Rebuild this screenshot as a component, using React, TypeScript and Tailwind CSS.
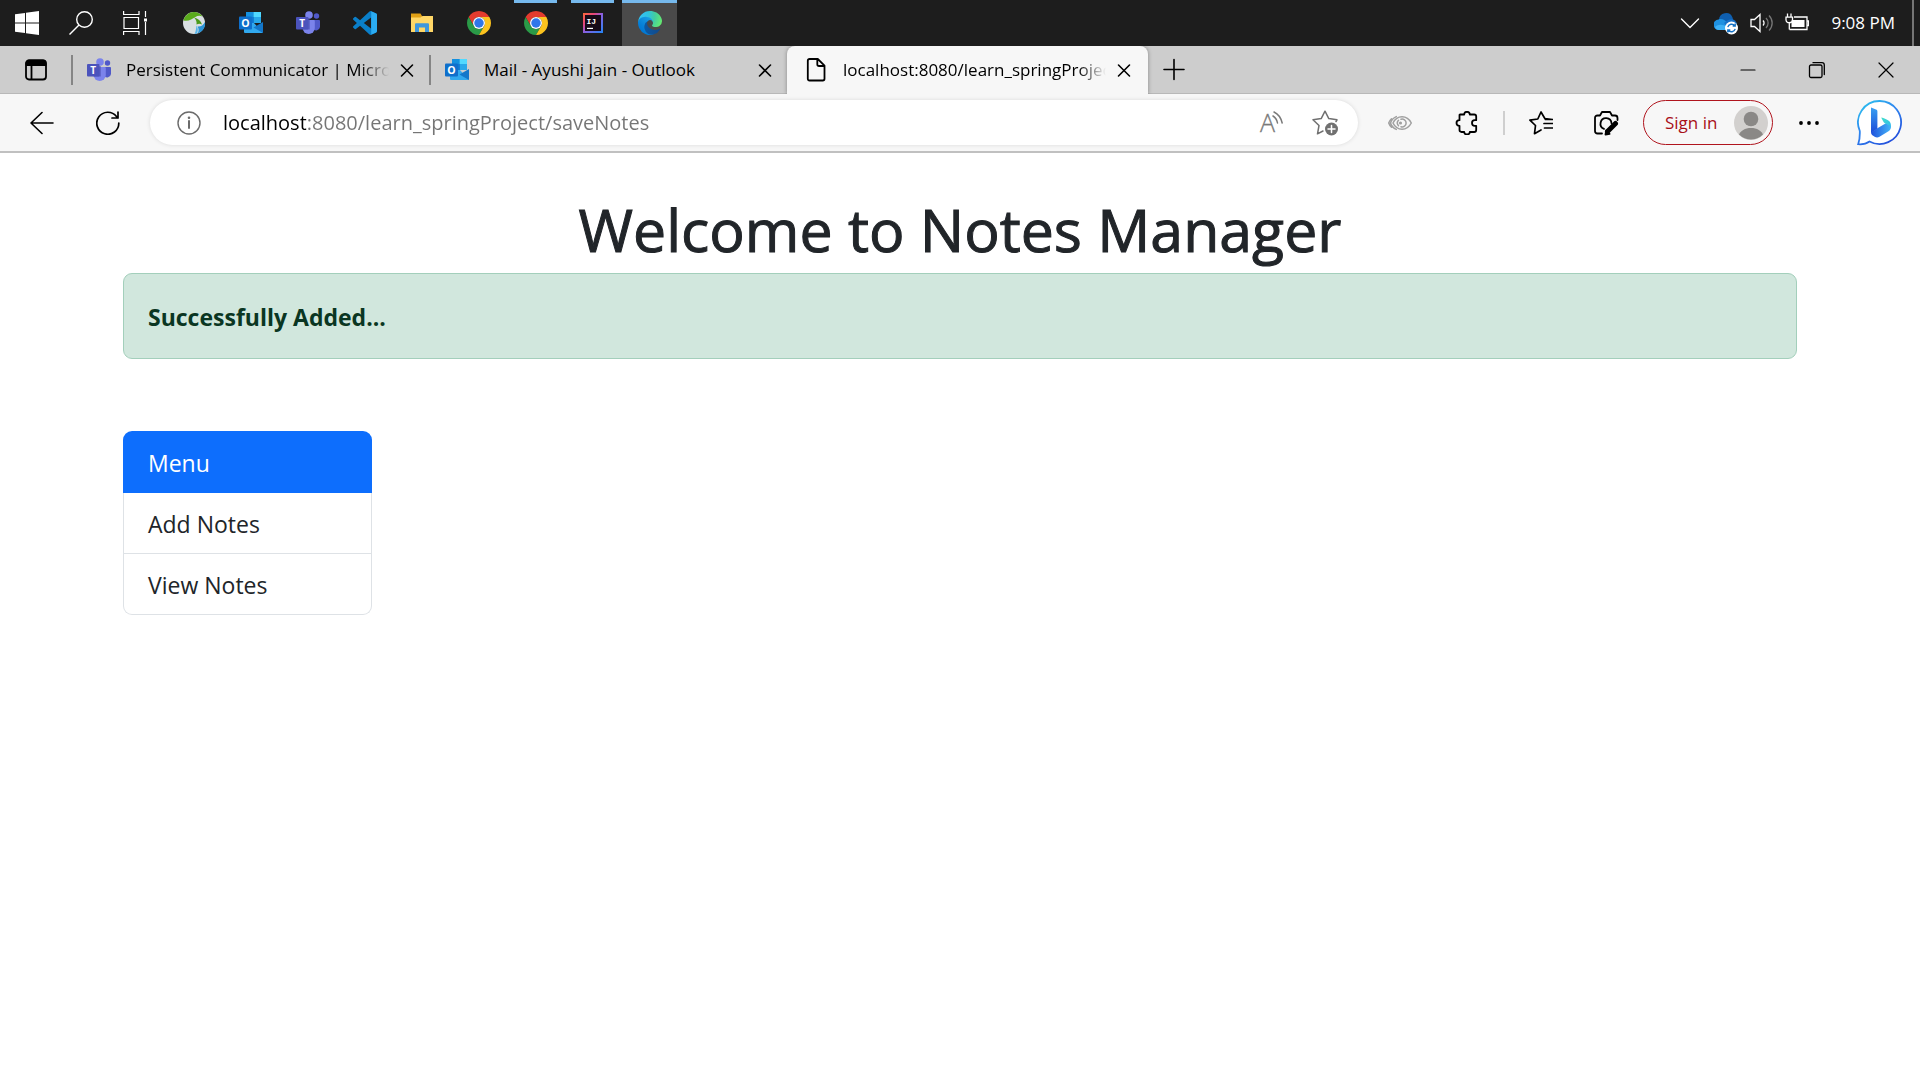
import React from "react";

type Kids = { children: React.ReactNode };

/* ---------- Brand icons ---------- */

function WindowsLogo() {
  return (
    <svg width="24" height="24" viewBox="0 0 24 24" fill="#fff" aria-hidden="true">
      <path d="M0 3.300 10 1.900V11.400H0zM11 1.750 24 0V11.400H11zM0 12.400H10V22.100L0 20.700zM11 12.400H24V24L11 22.250z" />
    </svg>
  );
}

function TaskSearch() {
  return (
    <svg width="24" height="24" viewBox="0 0 24 24" fill="none" stroke="#fff" strokeWidth="1.400" aria-hidden="true">
      <circle cx="15.500" cy="8.500" r="7.800" />
      <path d="M10 14 .5 23.500" />
    </svg>
  );
}

function TaskView() {
  return (
    <svg width="24" height="24" viewBox="0 0 24 24" fill="none" stroke="#fff" strokeWidth="1.200" aria-hidden="true">
      <path d="M1 6.500h14.500v11H1zM.600 0v3.500H16V0M.600 24v-3.500H16V24M22.500 0v6M22.500 11v13" />
      <path d="M21 7.500h3v3h-3z" fill="#fff" stroke="none" />
    </svg>
  );
}

function GlobeApp() {
  return (
    <svg width="24" height="24" viewBox="0 0 24 24" aria-hidden="true">
      <circle cx="12" cy="12" r="11" fill="#d9dfe2" />
      <path d="M1.500 9.500C3 4 7.500 1 12 1c3.500 0 6.500 1.500 8.500 4.500-2.500-1-5-.8-7 .5C10 8 7 10.500 1.500 9.500z" fill="#5aab1c" />
      <path d="M12 6.500c4 1 7 3.500 8 7-2-1-3.500-1-5.500 0 .5-3-.5-5-2.500-7z" fill="#4b9a1a" />
      <path d="M23 11c.7 5.500-2.500 10-7.500 11.400C17 20 17 18 15.500 15.500c3 .5 5.500-1 7.500-4.500z" fill="#2a93d6" />
      <path d="M14.500 14.500c1.500 2.500 1.800 5 .5 8l-2.500.4c1.500-2.500 1.500-5.500 2-8.400z" fill="#55b5ea" />
    </svg>
  );
}

function OutlookLogo() {
  return (
    <svg width="24" height="24" viewBox="0 0 24 24" aria-hidden="true">
      <path d="M7 1h15v11H7z" fill="#0a63b8" />
      <path d="M7 1h7.500v5H7z" fill="#1490df" />
      <path d="M14.500 1H22v5h-7.500z" fill="#50d9ff" />
      <path d="M14.500 6H22v6h-7.500z" fill="#28a8ea" />
      <path d="M7 6h7.500v6H7z" fill="#0f78d4" />
      <path d="M5 12h10l9 10H6a1 1 0 0 1-1-1z" fill="#31a9ee" />
      <path d="M24 11v11L14.500 16.500z" fill="#1377ca" />
      <rect y="5.500" width="13" height="13" rx="1" fill="#0f6fcb" />
      <text x="6.500" y="16" textAnchor="middle" fontFamily="Open Sans, sans-serif" fontWeight="700" fontSize="10.500" fill="#fff">O</text>
    </svg>
  );
}

function TeamsLogo() {
  return (
    <svg width="24" height="24" viewBox="0 0 24 24" aria-hidden="true">
      <circle cx="20.500" cy="5" r="2.700" fill="#5059c9" />
      <path d="M17 9h6.200c.5 0 .8.300.8.800v6.200a4 4 0 0 1-7 2z" fill="#5059c9" />
      <circle cx="13" cy="4" r="3.800" fill="#7b83eb" />
      <path d="M7.500 9h10.400c.5 0 .9.400.9.900v7a6 6 0 0 1-12.200 0V9.900c0-.5.400-.9.900-.9z" fill="#7b83eb" />
      <path d="M6.600 8h7.200v10.500H6.600z" fill="#4348a8" opacity=".6" />
      <rect y="6" width="12.500" height="12.500" rx="1" fill="#4b53bc" />
      <text x="6.250" y="15.700" textAnchor="middle" fontFamily="Open Sans, sans-serif" fontWeight="700" fontSize="10" fill="#fff">T</text>
    </svg>
  );
}

function CodeLogo() {
  return (
    <svg width="24" height="24" viewBox="0 0 24 24" aria-hidden="true">
      <path
        fill="#0a7fc9"
        fillRule="evenodd"
        d="M23.150 2.587L18.210.210a1.494 1.494 0 0 0-1.705.290l-9.460 8.630-4.120-3.128a.999.999 0 0 0-1.276.057L.327 7.261A1 1 0 0 0 .326 8.740L3.899 12 .326 15.260a1 1 0 0 0 .001 1.479L1.650 17.940a.999.999 0 0 0 1.276.057l4.120-3.128 9.460 8.630a1.492 1.492 0 0 0 1.704.290l4.942-2.377A1.500 1.500 0 0 0 24 20.060V3.939a1.500 1.500 0 0 0-.850-1.352zm-5.146 14.861L10.826 12l7.178-5.448v10.896z"
      />
      <path fill="#2bacf2" d="M18.210.210 23.150 2.587A1.500 1.500 0 0 1 24 3.939V20.060a1.500 1.500 0 0 1-.850 1.352L18.210 23.790z" />
    </svg>
  );
}

function FolderLogo() {
  return (
    <svg width="24" height="24" viewBox="0 0 24 24" aria-hidden="true">
      <path d="M1 2.500h9.500L12 5v4H1z" fill="#e0a015" />
      <path d="M1 6.500h9.500L12.500 5H23v16H1z" fill="#ffd767" />
      <path d="M5 21v-7.500c0-.8.500-1.300 1.300-1.300h11.400c.8 0 1.300.5 1.300 1.300V21h-4v-4.500H9V21z" fill="#3f97dc" />
    </svg>
  );
}

function ChromeLogo() {
  return (
    <svg width="24" height="24" viewBox="0 0 48 48" aria-hidden="true">
      <path fill="#e33b2e" d="M24 12H44.780A24 24 0 0 0 3.220 12L13.610 30A12 12 0 0 1 24 12z" />
      <path fill="#2a9a47" d="M3.220 12A24 24 0 0 0 24 48L34.390 30A12 12 0 0 1 13.610 30z" />
      <path fill="#fcc31e" d="M44.780 12H24A12 12 0 0 1 34.390 30L24 48A24 24 0 0 0 44.780 12z" />
      <circle cx="24" cy="24" r="12" fill="#fff" />
      <circle cx="24" cy="24" r="9.500" fill="#2f76ea" />
    </svg>
  );
}

function IdeaLogo() {
  return (
    <svg width="20" height="20" viewBox="0 0 20 20" aria-hidden="true">
      <defs>
        <linearGradient id="ij" x1="0" y1="0" x2="1" y2="1">
          <stop offset="0" stopColor="#fc6a35" />
          <stop offset=".3" stopColor="#e8457c" />
          <stop offset=".5" stopColor="#8a5fe0" />
          <stop offset="1" stopColor="#2186f5" />
        </linearGradient>
      </defs>
      <rect width="20" height="20" fill="url(#ij)" />
      <rect x="2" y="2" width="16" height="16" fill="#160a18" />
      <text x="3.500" y="10.500" fontFamily="Liberation Mono, monospace" fontWeight="700" fontSize="8" fill="#fff">IJ</text>
      <path d="M4 14.800h6v1.200H4z" fill="#fff" />
    </svg>
  );
}

function EdgeLogo() {
  return (
    <svg width="24" height="24" viewBox="0 0 256 256" aria-hidden="true">
      <defs>
        <linearGradient id="e1" x1="58" y1="177" x2="236" y2="177" gradientUnits="userSpaceOnUse">
          <stop offset="0" stopColor="#0c59a4" />
          <stop offset="1" stopColor="#114a8b" />
        </linearGradient>
        <linearGradient id="e2" x1="158" y1="100" x2="46" y2="222" gradientUnits="userSpaceOnUse">
          <stop offset="0" stopColor="#1b9de2" />
          <stop offset=".2" stopColor="#1595df" />
          <stop offset=".7" stopColor="#0680d7" />
          <stop offset="1" stopColor="#0078d4" />
        </linearGradient>
        <radialGradient id="e3" cx="26" cy="45" r="240" gradientUnits="userSpaceOnUse">
          <stop offset="0" stopColor="#35c1f1" />
          <stop offset=".35" stopColor="#2fc2df" />
          <stop offset=".65" stopColor="#43cda0" />
          <stop offset="1" stopColor="#66eb6e" />
        </radialGradient>
      </defs>
      <path fill="url(#e1)" d="M231 190.500c-3.400 1.800-6.900 3.400-10.500 4.700a101.500 101.500 0 0 1-35.900 6.500c-47.300 0-88.500-32.500-88.500-74.300.1-11.400 6.400-21.900 16.400-27.300-42.800 1.800-53.800 46.400-53.800 72.500 0 73.900 68.100 81.400 82.800 81.400 7.900 0 19.800-2.300 27-4.600l1.300-.4a128.300 128.300 0 0 0 66.600-52.800 4 4 0 0 0-5.400-5.700z" />
      <path fill="url(#e2)" d="M105.700 241.400a79.200 79.200 0 0 1-22.700-21.300 80.700 80.700 0 0 1 29.500-120c3.100-1.500 8.500-4.100 15.600-4a32.400 32.400 0 0 1 25.700 13 31.900 31.900 0 0 1 6.300 18.700c0-.2 24.500-79.600-80-79.600-43.900 0-80 41.700-80 78.200-.2 19.300 4 38.500 12.100 56a128 128 0 0 0 156.500 67 75.500 75.500 0 0 1-62.800-8z" />
      <path fill="url(#e3)" d="M152.300 148.900c-.8 1-3.300 2.500-3.300 5.700 0 2.600 1.700 5.100 4.700 7.200 14.400 10 41.500 8.700 41.600 8.700 10.700 0 21.100-2.900 30.300-8.300A61.400 61.400 0 0 0 256 109.300c.3-22.400-8-37.300-11.300-43.900C223.500 23.900 177.700 0 128 0A128 128 0 0 0 0 126.200c.5-36.500 36.800-66 80-66 3.500 0 23.500.3 42 10.100 16.300 8.600 24.900 18.900 30.800 29.200 6.200 10.700 7.300 24.100 7.300 29.500 0 5.300-2.700 13.300-7.800 19.900z" />
    </svg>
  );
}

function BingLogo() {
  return (
    <svg width="46" height="46" viewBox="0 0 46 46" aria-hidden="true">
      <defs>
        <linearGradient id="b1" x1="0" y1="0" x2="0.700" y2="1">
          <stop offset="0" stopColor="#2bc9ee" />
          <stop offset=".5" stopColor="#2f86ef" />
          <stop offset="1" stopColor="#2450dc" />
        </linearGradient>
        <linearGradient id="b2" x1="0" y1="0" x2="0" y2="1">
          <stop offset="0" stopColor="#3aa0f2" />
          <stop offset="1" stopColor="#1c4bd8" />
        </linearGradient>
        <linearGradient id="b3" x1="0" y1="0" x2="1" y2="1">
          <stop offset="0" stopColor="#3fe0c8" />
          <stop offset="1" stopColor="#35b8ef" />
        </linearGradient>
        <linearGradient id="b4" x1="0" y1="0" x2="1" y2="0">
          <stop offset="0" stopColor="#1f50dc" />
          <stop offset="1" stopColor="#45b6f8" />
        </linearGradient>
      </defs>
      <path d="M23 1a21.500 21.500 0 1 1-10.500 40.500C9 44 5 44.500 1.200 44.200 2.500 40.500 3 37 2.800 31A21.500 21.500 0 0 1 23 1z" fill="#fff" stroke="url(#b1)" strokeWidth="1.800" />
      <path d="M14 7.500l5 2c.9.400 1.400 1 1.400 2v17.200L14 33z" fill="url(#b2)" />
      <path d="M14 32.500l6.400-4.200 8.500-5 5 2.200c.5 2.500-.4 4.500-2.400 5.800L22.500 36.800c-1.500.9-3.300.9-4.800 0C15.500 35.500 14 34.500 14 32.500z" fill="url(#b4)" />
      <path d="M24.600 17.400c3 1 6.300 2.100 8 4 1.500 1.800 1.700 4 .8 6-.3-1.800-1.500-2.400-3-3l-2.500-1.200c-.8-.4-1.200-.9-1.600-1.700l-1.900-3.400c-.1-.4 0-.7.2-.7z" fill="url(#b3)" />
    </svg>
  );
}

/* ---------- Line icons ---------- */

function Line({ children, size = 24, w = 1.4 }: Kids & { size?: number; w?: number }) {
  return (
    <svg
      width={size}
      height={size}
      viewBox={`0 0 ${size} ${size}`}
      fill="none"
      stroke="currentColor"
      strokeWidth={w}
      strokeLinecap="round"
      strokeLinejoin="round"
      aria-hidden="true"
    >
      {children}
    </svg>
  );
}

const CloseMark = () => (
  <Line size={18} w={1.6}>
    <path d="M3.500 4 14.500 15M14.500 4 3.500 15" />
  </Line>
);

const PageIcon = () => (
  <Line w={1.8}>
    <path d="M5.500 1h8.300L20.500 7.700V20.800c0 1-.7 1.700-1.700 1.700H5.500c-1 0-1.700-.7-1.700-1.700V2.700C3.800 1.700 4.500 1 5.500 1zM13.300 1v5.200c0 1.100.6 1.800 1.800 1.800h5.200" />
  </Line>
);

/* ---------- Task bar ---------- */

const apps = [
  { name: "Browser", icon: <GlobeApp />, state: "" },
  { name: "Outlook", icon: <OutlookLogo />, state: "" },
  { name: "Teams", icon: <TeamsLogo />, state: "" },
  { name: "Visual Studio Code", icon: <CodeLogo />, state: "" },
  { name: "File Explorer", icon: <FolderLogo />, state: "" },
  { name: "Chrome", icon: <ChromeLogo />, state: "" },
  { name: "Chrome profile", icon: <ChromeLogo />, state: "open" },
  { name: "IntelliJ IDEA", icon: <IdeaLogo />, state: "open" },
  { name: "Edge", icon: <EdgeLogo />, state: "active" },
];

function Taskbar() {
  return (
    <div className="flex h-[46px] bg-[#1d1d1d] text-white">
      <button aria-label="Start" className="flex w-[54px] items-center justify-center"><WindowsLogo /></button>
      <button aria-label="Search" className="flex w-[54px] items-center justify-center"><TaskSearch /></button>
      <button aria-label="Task view" className="mr-[3px] flex w-[54px] items-center justify-center"><TaskView /></button>
      {apps.map((a) => (
        <button
          key={a.name}
          aria-label={a.name}
          className={
            a.state === "active"
              ? "relative mx-px flex w-[55px] items-center justify-center bg-[#4a4a4a]"
              : "relative flex w-[57px] items-center justify-center"
          }
        >
          {a.icon}
          {a.state === "open" && <span className="absolute inset-x-[7px] top-0 h-[3px] bg-[#76b9ed]" />}
          {a.state === "active" && <span className="absolute inset-x-0 top-0 h-[3px] bg-[#76b9ed]" />}
        </button>
      ))}
      <div className="ml-auto flex items-center">
        <button aria-label="Show hidden icons">
          <Line size={20}><path d="M1.500 6 10 14.500 18.500 6" /></Line>
        </button>
        <button aria-label="OneDrive" className="ml-[14px]">
          <svg width="24" height="24" viewBox="0 0 24 24" aria-hidden="true">
            <path d="M5 9a7 7 0 0 1 13.500-2.500L20 12H4z" fill="#0f5fb0" />
            <path d="M4.500 8.500C8 7 11 9 14 12l-5 7H5a5 5 0 0 1-.5-10.500z" fill="#1e90e0" />
            <path d="M14 9c4-2 8 0 9 4l-9 3-4-4z" fill="#1670c8" />
            <path d="M1 16c3-3 8-3 12 0v3H5c-2 0-3.500-1-4-3z" fill="#3db0f5" />
            <circle cx="17.500" cy="17" r="6.500" fill="#fff" />
            <path d="M13.800 16.200a4 4 0 0 1 7-1.500M21.200 17.800a4 4 0 0 1-7 1.500M21.200 12.500v2.500h-2.500M13.800 21.500V19h2.500" fill="none" stroke="#1471c4" strokeWidth="1.400" />
          </svg>
        </button>
        <button aria-label="Volume" className="ml-3">
          <svg width="24" height="24" viewBox="0 0 24 24" fill="none" stroke="#fff" strokeWidth="1.300" aria-hidden="true">
            <path d="M1 8.500h3.500L10 3.500v17L4.500 15.500H1zM13 9.500a3.500 3.500 0 0 1 0 5" />
            <path d="M16 7a7 7 0 0 1 0 10M19 4.500a10.500 10.500 0 0 1 0 15" stroke="#777" />
          </svg>
        </button>
        <button aria-label="Battery" className="ml-[11px]">
          <svg width="24" height="24" viewBox="0 0 24 24" fill="none" stroke="#fff" strokeWidth="1.300" aria-hidden="true">
            <path d="M9 6h13v12.500H4.500M22 10h1.500v4.500H22M2.500 2.500V6M6 2.500V6M1 6.200h6.500v2.500c0 2-1.300 3-3.200 3S1 10.700 1 8.700zM4.300 12v6.500" />
            <path d="M7 9h12.500v7H6.500v-4z" fill="#fff" stroke="none" />
          </svg>
        </button>
        <time className="mr-[17px] ml-[22px] text-[17px] leading-6">9:08 PM</time>
        <span className="mr-[6px] h-full w-[2px] bg-[#767676]" />
      </div>
    </div>
  );
}

/* ---------- Tab strip ---------- */

function Tab({ icon, title, active, fade }: { icon: React.ReactNode; title: string; active?: boolean; fade?: boolean }) {
  return (
    <div
      className={
        active
          ? "flex w-[361px] items-center rounded-t-lg bg-[#f7f7f7] pr-[15px] pl-[17px] shadow-[0_0_4px_rgba(0,0,0,0.35)]"
          : "flex w-[356px] items-center pr-[13px] pl-[14px]"
      }
    >
      {icon}
      <button
        role="tab"
        aria-selected={!!active}
        className={
          fade
            ? "ml-[15px] min-w-0 flex-1 overflow-hidden text-left text-[17px] leading-6 whitespace-nowrap [mask-image:linear-gradient(to_right,#000_calc(100%-28px),transparent)]"
            : "ml-[15px] min-w-0 flex-1 overflow-hidden text-left text-[17px] leading-6 whitespace-nowrap"
        }
      >
        {title}
      </button>
      <button aria-label={`Close ${title}`} className="ml-[9px]"><CloseMark /></button>
    </div>
  );
}

const Divider = () => <span className="h-[30px] w-[2px] self-center bg-[#858585]" />;

function TabStrip() {
  return (
    <div className="flex h-12 overflow-hidden bg-[#cdcdcd] text-black shadow-[inset_0_-1px_0_#b8b8b8]">
      <button aria-label="Tab actions" className="flex w-[71px] items-center justify-center">
        <Line w={1.8}>
          <rect x="2" y="2.500" width="20" height="19" rx="3" />
          <path d="M2.500 7V5a2.500 2.500 0 0 1 2.500-2.500h14A2.500 2.500 0 0 1 21.500 5v2z" fill="currentColor" />
          <path d="M7.500 7v14" />
        </Line>
      </button>
      <Divider />
      <Tab icon={<TeamsLogo />} title="Persistent Communicator | Micros" fade />
      <Divider />
      <Tab icon={<OutlookLogo />} title="Mail - Ayushi Jain - Outlook" />
      <Tab icon={<PageIcon />} title="localhost:8080/learn_springProjec" active fade />
      <button aria-label="New tab" className="flex w-[52px] items-center justify-center">
        <Line w={1.600}><path d="M2 11.500h20M12 1.500v20" /></Line>
      </button>
      <div className="ml-auto flex">
        <button aria-label="Minimize" className="flex w-[69px] items-center justify-center">
          <Line size={18} w={1.200}><path d="M2 9h14" /></Line>
        </button>
        <button aria-label="Restore" className="flex w-[69px] items-center justify-center">
          <Line size={18} w={1.300}>
            <rect x="1.500" y="4" width="12.500" height="12.500" rx="1.500" />
            <path d="M5 1.700h9c1.400 0 2.300 1 2.300 2.300v9.500" />
          </Line>
        </button>
        <button aria-label="Close window" className="flex w-[69px] items-center justify-center">
          <Line size={18} w={1.200}><path d="M2 2 16 16M16 2 2 16" /></Line>
        </button>
      </div>
    </div>
  );
}

/* ---------- Address bar ---------- */

function Toolbar() {
  return (
    <div className="flex items-center border-b-2 border-[#c0c0c0] bg-[#f7f7f7] py-[6px] text-black">
      <button aria-label="Back" className="ml-[30px]">
        <Line w={1.600}><path d="M23 12H1M12 1.500 1 12 12 22.500" /></Line>
      </button>
      <button aria-label="Refresh" className="ml-[42px]">
        <Line w={1.700}><path d="M22.800 12A11 11 0 1 1 20.500 5.500L22 7M22 1v6h-6" /></Line>
      </button>
      <form
        className="ml-[30px] flex h-[45px] flex-1 items-center rounded-full bg-white pr-[20px] pl-[27px] shadow-[0_0_4px_rgba(0,0,0,0.12)]"
        onSubmit={(e) => e.preventDefault()}
      >
        <button type="button" aria-label="Site information" className="text-[#6b6b6b]">
          <Line><circle cx="12" cy="12" r="11" /><path d="M12 10v7" strokeWidth="2" /><circle cx="12" cy="6.800" r=".600" fill="currentColor" /></Line>
        </button>
        <input
          aria-label="Address"
          defaultValue="localhost:8080/learn_springProject/saveNotes"
          className="ml-[22px] min-w-0 flex-1 bg-[linear-gradient(to_right,#000_83px,#757575_83px)] bg-clip-text text-[20px] leading-7 text-transparent outline-none"
        />
        <button type="button" aria-label="Read aloud" className="text-[#7a7a7a]">
          <svg width="24" height="24" viewBox="0 0 24 24" fill="none" stroke="currentColor" strokeWidth="1.500" strokeLinecap="round" overflow="visible" aria-hidden="true">
            <text x="1" y="21" fontFamily="Open Sans, sans-serif" fontWeight="300" fontSize="25" fill="currentColor" strokeWidth=".3">A</text>
            <path d="M14 5c2.200 1.400 4 3.800 4.500 7M15 1c4.200 2 7 6 8.200 11" />
          </svg>
        </button>
        <button type="button" aria-label="Add to favorites" className="ml-[29px] text-[#707070]">
          <svg width="26" height="26" viewBox="0 0 26 26" fill="none" stroke="currentColor" strokeWidth="1.500" strokeLinejoin="round" strokeLinecap="round" aria-hidden="true">
            <path d="M24 11.500l1-1.700-8.200-1.200L13 1.200 9.200 8.600 1 9.800l6 5.700L5.500 23.800 11 21" />
            <circle cx="19.500" cy="19" r="6.500" fill="currentColor" stroke="none" />
            <path d="M19.500 15.500v7M16 19h7" stroke="#fff" />
          </svg>
        </button>
      </form>
      <button aria-label="Tracking prevention" className="ml-[30px] text-[#a0a0a0]">
        <Line w={1.500}>
          <path d="M5 12C9 3.700 19 3.700 23.300 12 19 20.300 9 20.300 5 12z" />
          <path d="M8.300 5.600C5.500 6.800 3.500 9 2.500 12c1 3 3 5.200 5.800 6.400M3.500 7.800C2 9.200 1.200 10.500.700 12c.5 1.500 1.300 2.800 2.800 4.200" />
          <path d="M13 8.300a3.900 3.900 0 1 1 0 7.400M10.500 9.300a4 4 0 0 0 0 5.400" />
          <circle cx="12.500" cy="12" r=".800" fill="currentColor" />
        </Line>
      </button>
      <button aria-label="Extensions" className="ml-[43px]">
        <Line w={1.800}>
          <path d="M5 3.500h4.200c0-1.700 1-2.700 2.800-2.700s2.800 1 2.800 2.700h4.400c1.300 0 2 .7 2 2v3.700h-1.500c-1.700 0-2.700 1-2.700 2.800s1 2.800 2.700 2.800h1.500v4.200c0 1.300-.7 2-2 2h-4.400c0 1.500-1 2.500-2.800 2.500S9.200 22.500 9.200 21H6.500c-1.300 0-2-.7-2-2v-4.200c-2 0-3-1-3-2.800s1-2.800 3-2.800V4c0-.3.200-.5.500-.5z" />
        </Line>
      </button>
      <span className="ml-6 h-6 w-[2px] bg-[#cfcfcf]" />
      <button aria-label="Favorites" className="ml-6">
        <Line w={1.700}>
          <path d="M23.500 8.500 16 7.700 12 1 8.800 8 .900 9.200 6.500 14.500 5.500 22.700 12 19M16.500 8.500h7M15 12.500h8.500M15.500 17h8" />
        </Line>
      </button>
      <button aria-label="Screenshot" className="ml-10">
        <Line size={26} w={1.800}>
          <path d="M9 23.500H4.500c-1.600 0-2.500-.9-2.500-2.500V8c0-1.600.9-2.500 2.500-2.500H7L9 2h8l2 3.500h3c1.600 0 2.500.9 2.500 2.500v2M11 18.800a5.500 5.500 0 1 1 7.500-5.500" />
          <path d="M14.500 21.500 22.500 13.500" strokeWidth="5" />
          <path d="M12.500 24.500l.7-4 3.400 3.300z" fill="currentColor" />
        </Line>
      </button>
      <button className="ml-6 flex h-[45px] w-[130px] items-center justify-between rounded-full border border-[#b0141d] pr-1 pl-[21px] text-[17px] leading-6 text-[#a80f18]">
        Sign in
        <svg width="34" height="34" viewBox="0 0 34 34" aria-hidden="true">
          <defs><clipPath id="av"><circle cx="17" cy="17" r="16.500" /></clipPath></defs>
          <circle cx="17" cy="17" r="17" fill="#d2d0ce" />
          <circle cx="17" cy="13" r="7.300" fill="#8a8886" />
          <path d="M4.500 29.500C6.500 24.500 11 22 17 22s10.500 2.500 12.500 7.500C26 32.500 22 34 17 34s-9-1.500-12.500-4.500z" fill="#8a8886" clipPath="url(#av)" />
        </svg>
      </button>
      <button aria-label="Settings and more" className="ml-6">
        <Line><g fill="currentColor" stroke="none"><circle cx="4" cy="12" r="1.900" /><circle cx="12" cy="12" r="1.900" /><circle cx="20" cy="12" r="1.900" /></g></Line>
      </button>
      <button aria-label="Bing" className="mr-[17px] ml-9 -my-1"><BingLogo /></button>
    </div>
  );
}

/* ---------- Page ---------- */

export default function App() {
  return (
    <div className="min-h-screen bg-white font-['Open_Sans','Noto_Sans',sans-serif]">
      <Taskbar />
      <TabStrip />
      <Toolbar />
      <main className="px-[123px] pt-10 text-[23px] leading-9">
        <h1 className="text-center text-[59px] leading-[72px] font-medium text-[#212529] [-webkit-text-stroke:1px_#212529]">
          Welcome to Notes Manager
        </h1>
        <div role="alert" className="mt-2 rounded-[9px] border border-[#a3cfbb] bg-[#d1e7dd] px-6 pt-[25px] pb-[23px] font-bold text-[#0a3622]">
          Successfully Added...
        </div>
        <nav aria-label="Notes" className="mt-[72px] flex w-[249px] flex-col">
          <a href="#menu" aria-current="true" className="rounded-t-[9px] bg-[#0d6efd] px-[25px] pt-[14px] pb-3 text-white">Menu</a>
          <a href="#add" className="border-x border-b border-[#dee2e6] px-6 pt-[13px] pb-[11px] text-[#212529]">Add Notes</a>
          <a href="#view" className="rounded-b-[9px] border-x border-b border-[#dee2e6] px-6 pt-[13px] pb-[11px] text-[#212529]">View Notes</a>
        </nav>
      </main>
    </div>
  );
}
